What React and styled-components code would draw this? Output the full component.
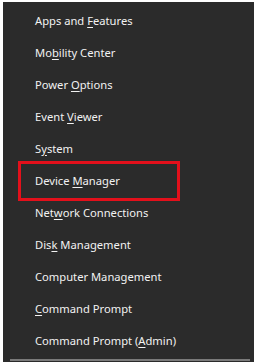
import React from 'react'
import styled, {createGlobalStyle} from 'styled-components'

const Global = createGlobalStyle`
    html, body { margin: 0; padding: 0; background: #fff; }
    body { width: 254px; height: 362px; overflow: hidden; }
`

const Menu = styled.div`
    position: relative;
    margin: 2px 0 0 3px;
    width: 251px;
    height: 360px;
    background-color: #2b2b2b;
    display: flex;
    flex-direction: column;
    padding-top: 2px;
    box-sizing: border-box;
`

const Item = styled.div`
    position: relative;
    height: 32px;
    flex-shrink: 0;
    display: flex;
    align-items: center;
    padding-left: 32px;
    font-family: "Noto Sans", sans-serif;
    font-size: 11.2px;
    color: #f2f2f2;
    &::after {
        content: '';
        display: ${props => props.highlight ? 'block' : 'none'};
        position: absolute;
        left: 15px;
        top: -3px;
        width: 162px;
        height: 40px;
        box-sizing: border-box;
        border: 3px solid #e3101b;
    }
`

const Key = styled.span`
    text-decoration: underline;
    text-underline-offset: 2px;
`

const Divider = styled.div`
    position: absolute;
    left: 7px;
    right: 4px;
    bottom: 1px;
    height: 2px;
    background: #7a7a7a;
`

const items = [
    ['Apps and ', 'F', 'eatures'],
    ['Mo', 'b', 'ility Center'],
    ['Power ', 'O', 'ptions'],
    ['Event ', 'V', 'iewer'],
    ['S', 'y', 'stem'],
    ['Device ', 'M', 'anager', true],
    ['Net', 'w', 'ork Connections'],
    ['Dis', 'k', ' Management'],
    ['Computer Management', '', ''],
    ['', 'C', 'ommand Prompt'],
    ['Command Prompt (', 'A', 'dmin)'],
]

export default function App() {
    return (
        <>
            <Global />
            <Menu>
                {items.map(([a, k, b, hl], i) => (
                    <Item key={i} highlight={hl}>
                        <span>{a}{k && <Key>{k}</Key>}{b}</span>
                    </Item>
                ))}
                <Divider />
            </Menu>
        </>
    )
}
